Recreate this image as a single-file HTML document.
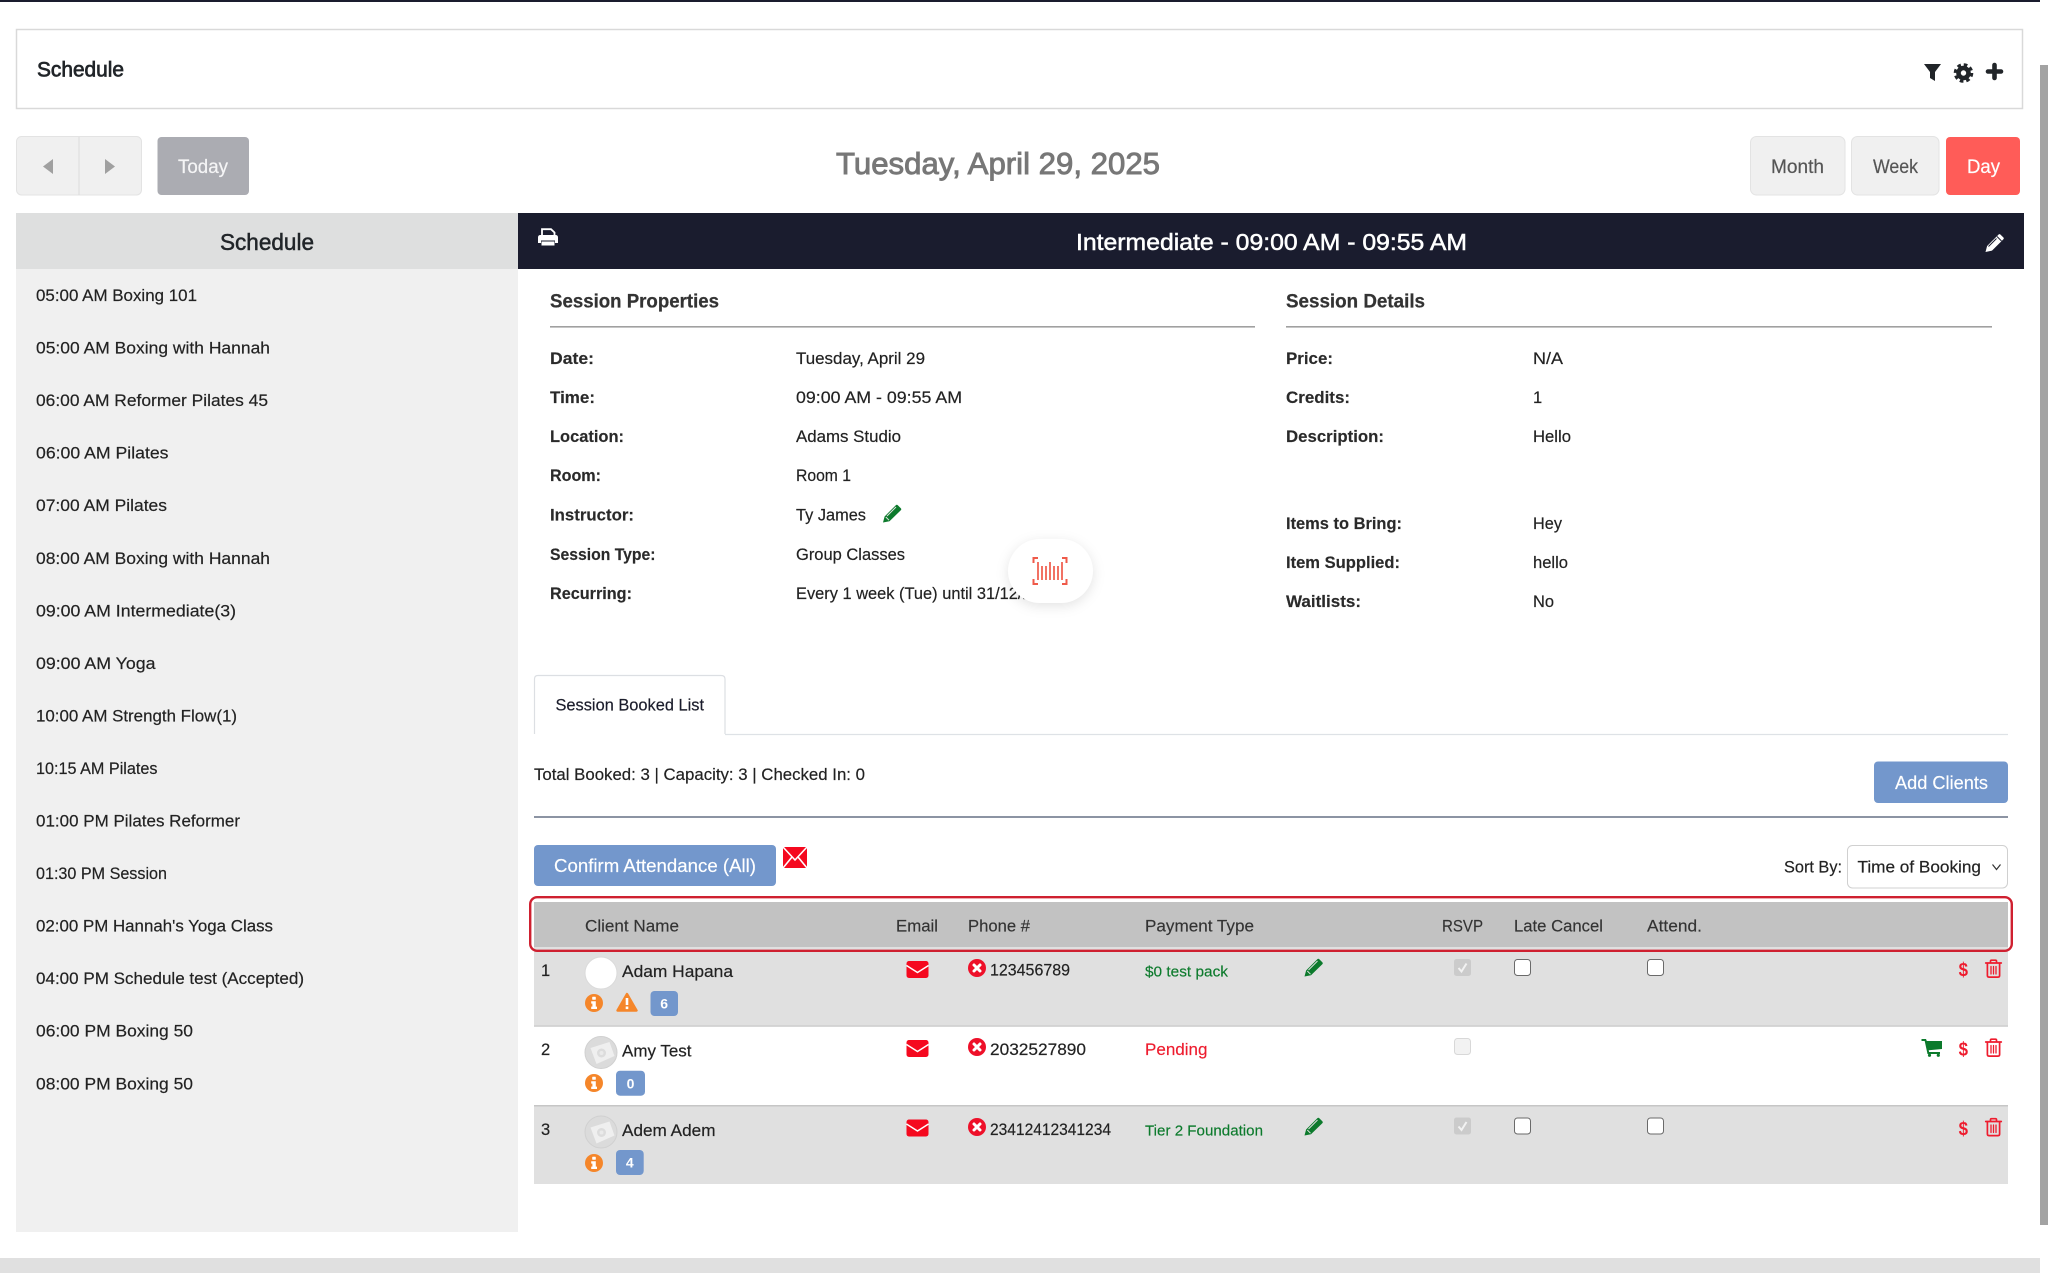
<!DOCTYPE html>
<html lang="en"><head><meta charset="utf-8"><title>Schedule</title>
<style>
html,body{margin:0;padding:0;background:#fff;width:2048px;height:1273px;overflow:hidden}
svg{display:block}
text{font-family:"Liberation Sans",sans-serif;fill:#222;white-space:pre}
.s{font-size:16.5px;stroke:#222;stroke-width:.18px}
.b{font-size:16.5px;font-weight:bold;fill:#2a2a2a;stroke:#2a2a2a;stroke-width:.15px}
.h{font-size:19px;font-weight:bold;fill:#333;stroke:#333;stroke-width:.25px}
.th{font-size:16.5px;fill:#333;stroke:#333;stroke-width:.15px}
.d{font-size:19px;font-weight:bold;fill:#ee1c2e}
</style></head><body>
<svg xmlns="http://www.w3.org/2000/svg" width="2048" height="1273" viewBox="0 0 2048 1273">
<defs>
<g id="mail"><rect width="22" height="17" rx="2.5" fill="#f5091f"/><path d="M0 4.5 L11 11.5 L22 4.5" fill="none" stroke="#fff" stroke-width="1.5"/></g>
<g id="xc"><circle cx="9" cy="9" r="9" fill="#ee1029"/><path d="M6 6 L12 12 M12 6 L6 12" stroke="#fff" stroke-width="3" stroke-linecap="round"/></g>
<g id="pen"><path d="M0 18.5 L1.6 12.5 L12.8 1.2 Q13.8 .2 14.8 1.2 L17.8 4.2 Q18.8 5.2 17.8 6.2 L6.5 17.2 Z" fill="#0c7a2c"/><path d="M2.8 13 L6 16.2 M4 12 L13 3" stroke="#e0e0e0" stroke-width="1" fill="none"/></g>
<g id="tr" fill="none" stroke="#ee1c2e" stroke-linecap="round"><path stroke-width="1.7" d="M5.5 3 V1.6 Q5.5 .7 6.5 .7 H10.5 Q11.5 .7 11.5 1.6 V3 M.7 3.5 H16.3 M2.4 3.5 V16 Q2.4 17.6 4 17.6 H13 Q14.6 17.6 14.6 16 V3.5"/><path stroke-width="1.3" d="M6 7 V14.5 M8.5 7 V14.5 M11 7 V14.5"/></g>
<g id="info"><circle cx="9" cy="9" r="9" fill="#f5862a"/><rect x="7.2" y="2.8" width="3.6" height="3" rx=".7" fill="#fff"/><path d="M6.2 7.2 H10.8 V12.6 H12 V15 H6.2 V12.6 H7.4 V9.6 H6.2 Z" fill="#fff"/></g>
<g id="ck"><rect x=".5" y=".5" width="16" height="16" rx="3" fill="#fff" stroke="#6a6a6a" stroke-width="1"/></g>
<g id="dis"><rect width="17" height="17" rx="2.5" fill="#cbcbcb"/><path d="M4.5 9 L7.5 12.5 L12.5 4.5" fill="none" stroke="#f2f2f2" stroke-width="2"/></g>
<g id="av"><circle cx="16.5" cy="16.5" r="16" fill="#dbdbdb" stroke="#d0d0d0"/><path d="M6 12 L25 6 L30 20 L12 28 Z" fill="#efefef"/><circle cx="17" cy="17" r="4.5" fill="#dcdcdc"/><circle cx="17" cy="17" r="2" fill="#eaeaea"/></g>
</defs>

<rect width="2040" height="2" fill="#1a1c2e"/>
<rect x="2040" y="65" width="8" height="1160" fill="#a3a3a3"/>
<rect y="1258" width="2040" height="15" fill="#e0e0e0"/>

<!-- Header panel -->
<rect x="16.5" y="29.5" width="2006" height="79" fill="#fff" stroke="#d9d9d9" stroke-width="1.5"/>
<text x="37" y="76.5" font-size="21" textLength="87" lengthAdjust="spacingAndGlyphs" style="fill:#212529;stroke:#212529;stroke-width:.7px">Schedule</text>
<path d="M1924 64 H1941 L1935 72 V81 L1930 78 V72 Z" fill="#212529"/>
<circle cx="1963.5" cy="73" r="5" fill="none" stroke="#212529" stroke-width="4.6"/>
<circle cx="1963.5" cy="73" r="8.2" fill="none" stroke="#212529" stroke-width="3.2" stroke-dasharray="3.6 2.84"/>
<path d="M1994.5 65 V78 M1988 71.5 H2001" stroke="#212529" stroke-width="4.6" stroke-linecap="round"/>

<!-- Toolbar -->
<rect x="16.5" y="136.5" width="125" height="58.5" rx="5" fill="#f0f0f0" stroke="#e3e3e3"/>
<path d="M79 137 V195" stroke="#dcdcdc"/>
<path d="M53 159 V174 L43 166.5 Z M105 159 V174 L115 166.5 Z" fill="#a0a0a0"/>
<rect x="157.5" y="137" width="91.5" height="58" rx="4" fill="#abacb2"/>
<text x="178" y="173" font-size="19" textLength="50" lengthAdjust="spacingAndGlyphs" style="fill:#f5f5f6;stroke:#f5f5f6;stroke-width:.2px">Today</text>
<text x="836" y="174" font-size="31" textLength="324" lengthAdjust="spacingAndGlyphs" style="fill:#777;stroke:#777;stroke-width:.9px">Tuesday, April 29, 2025</text>
<rect x="1750.5" y="136.5" width="94.5" height="58.5" rx="6" fill="#f0f0f0" stroke="#e3e3e3"/>
<text x="1771" y="173" font-size="19" textLength="53" lengthAdjust="spacingAndGlyphs" style="fill:#555;stroke:#555;stroke-width:.2px">Month</text>
<rect x="1851.5" y="136.5" width="87.5" height="58.5" rx="6" fill="#f0f0f0" stroke="#e3e3e3"/>
<text x="1873" y="173" font-size="19" textLength="45" lengthAdjust="spacingAndGlyphs" style="fill:#555;stroke:#555;stroke-width:.2px">Week</text>
<rect x="1946" y="137" width="74" height="58" rx="4" fill="#ff5c58"/>
<text x="1967" y="173" font-size="19" textLength="33" lengthAdjust="spacingAndGlyphs" style="fill:#fff;stroke:#fff;stroke-width:.2px">Day</text>

<!-- Sidebar -->
<rect x="16" y="269" width="502" height="963" fill="#f0f0f0"/>
<rect x="16" y="213" width="502" height="56" fill="#dedfdf"/>
<text x="220" y="250" font-size="23" textLength="94" lengthAdjust="spacingAndGlyphs" style="fill:#212529;stroke:#212529;stroke-width:.5px">Schedule</text>
<g class="s">
<text x="36" y="301" textLength="161" lengthAdjust="spacingAndGlyphs">05:00 AM Boxing 101</text>
<text x="36" y="353.6" textLength="234" lengthAdjust="spacingAndGlyphs">05:00 AM Boxing with Hannah</text>
<text x="36" y="406.1" textLength="232" lengthAdjust="spacingAndGlyphs">06:00 AM Reformer Pilates 45</text>
<text x="36" y="458.7" textLength="132.5" lengthAdjust="spacingAndGlyphs">06:00 AM Pilates</text>
<text x="36" y="511.2" textLength="131" lengthAdjust="spacingAndGlyphs">07:00 AM Pilates</text>
<text x="36" y="563.8" textLength="234" lengthAdjust="spacingAndGlyphs">08:00 AM Boxing with Hannah</text>
<text x="36" y="616.3" textLength="200" lengthAdjust="spacingAndGlyphs">09:00 AM Intermediate(3)</text>
<text x="36" y="668.9" textLength="119.5" lengthAdjust="spacingAndGlyphs">09:00 AM Yoga</text>
<text x="36" y="721.4" textLength="201" lengthAdjust="spacingAndGlyphs">10:00 AM Strength Flow(1)</text>
<text x="36" y="774" textLength="121.5" lengthAdjust="spacingAndGlyphs">10:15 AM Pilates</text>
<text x="36" y="826.5" textLength="204" lengthAdjust="spacingAndGlyphs">01:00 PM Pilates Reformer</text>
<text x="36" y="879.1" textLength="131" lengthAdjust="spacingAndGlyphs">01:30 PM Session</text>
<text x="36" y="931.6" textLength="237" lengthAdjust="spacingAndGlyphs">02:00 PM Hannah's Yoga Class</text>
<text x="36" y="984.2" textLength="268" lengthAdjust="spacingAndGlyphs">04:00 PM Schedule test (Accepted)</text>
<text x="36" y="1036.7" textLength="157" lengthAdjust="spacingAndGlyphs">06:00 PM Boxing 50</text>
<text x="36" y="1089.3" textLength="157" lengthAdjust="spacingAndGlyphs">08:00 PM Boxing 50</text>
</g>

<!-- Session bar -->
<rect x="518" y="213" width="1506" height="56" fill="#1a1c2e"/>
<g fill="none" stroke="#fff" stroke-width="1.8"><path d="M542 236 V229.2 H551 L554.5 232.5 V236"/></g>
<path d="M540.5 235 H555.5 Q558 235 558 237.5 V243 H555 V240.5 H541 V243 H538 V237.5 Q538 235 540.5 235 Z" fill="#fff"/>
<rect x="541.5" y="241.5" width="13" height="4" fill="#fff"/>
<text x="1076" y="250" font-size="23.5" textLength="391" lengthAdjust="spacingAndGlyphs" style="fill:#fff;stroke:#fff;stroke-width:.5px">Intermediate - 09:00 AM - 09:55 AM</text>
<g transform="translate(1985.5 233)"><path d="M0 19 L1.6 13 L13 1.6 Q14 .6 15 1.6 L17.8 4.4 Q18.8 5.4 17.8 6.4 L6.5 17.6 Z" fill="#fff"/><path d="M11.5 3.5 L16 8 M3 13.5 L11 5.5" stroke="#1a1c2e" stroke-width="1" fill="none"/></g>

<!-- Session Properties -->
<text x="550" y="307.7" class="h" textLength="169" lengthAdjust="spacingAndGlyphs">Session Properties</text>
<rect x="550" y="326" width="705" height="1.6" fill="#a0a0a0"/>
<text x="1286" y="307.7" class="h" textLength="139" lengthAdjust="spacingAndGlyphs">Session Details</text>
<rect x="1286" y="326" width="706" height="1.6" fill="#a0a0a0"/>

<text x="550" y="364" class="b" textLength="44" lengthAdjust="spacingAndGlyphs">Date:</text>
<text x="550" y="403" class="b" textLength="45" lengthAdjust="spacingAndGlyphs">Time:</text>
<text x="550" y="442" class="b" textLength="74" lengthAdjust="spacingAndGlyphs">Location:</text>
<text x="550" y="481" class="b" textLength="51" lengthAdjust="spacingAndGlyphs">Room:</text>
<text x="550" y="520.7" class="b" textLength="84" lengthAdjust="spacingAndGlyphs">Instructor:</text>
<text x="550" y="560" class="b" textLength="105.5" lengthAdjust="spacingAndGlyphs">Session Type:</text>
<text x="550" y="599" class="b" textLength="82" lengthAdjust="spacingAndGlyphs">Recurring:</text>

<text x="796" y="364" class="s" textLength="129" lengthAdjust="spacingAndGlyphs">Tuesday, April 29</text>
<text x="796" y="403" class="s" textLength="166" lengthAdjust="spacingAndGlyphs">09:00 AM - 09:55 AM</text>
<text x="796" y="442" class="s" textLength="105" lengthAdjust="spacingAndGlyphs">Adams Studio</text>
<text x="796" y="481" class="s" textLength="55" lengthAdjust="spacingAndGlyphs" style="font-size:17px">Room 1</text>
<text x="796" y="520.7" class="s" textLength="70" lengthAdjust="spacingAndGlyphs">Ty James</text>
<use href="#pen" transform="translate(883 504)"/>
<text x="796" y="560" class="s" textLength="109" lengthAdjust="spacingAndGlyphs">Group Classes</text>
<text x="796" y="599" class="s" textLength="263" lengthAdjust="spacingAndGlyphs">Every 1 week (Tue) until 31/12/2025</text>

<text x="1286" y="364" class="b" textLength="47" lengthAdjust="spacingAndGlyphs">Price:</text>
<text x="1286" y="403" class="b" textLength="64" lengthAdjust="spacingAndGlyphs">Credits:</text>
<text x="1286" y="442" class="b" textLength="98" lengthAdjust="spacingAndGlyphs">Description:</text>
<text x="1286" y="529" class="b" textLength="116" lengthAdjust="spacingAndGlyphs">Items to Bring:</text>
<text x="1286" y="568" class="b" textLength="114" lengthAdjust="spacingAndGlyphs">Item Supplied:</text>
<text x="1286" y="607" class="b" textLength="75" lengthAdjust="spacingAndGlyphs">Waitlists:</text>
<text x="1533" y="364" class="s" textLength="30" lengthAdjust="spacingAndGlyphs">N/A</text>
<text x="1533" y="403" class="s">1</text>
<text x="1533" y="442" class="s" textLength="38" lengthAdjust="spacingAndGlyphs">Hello</text>
<text x="1533" y="529" class="s" textLength="29" lengthAdjust="spacingAndGlyphs">Hey</text>
<text x="1533" y="568" class="s" textLength="35" lengthAdjust="spacingAndGlyphs">hello</text>
<text x="1533" y="607" class="s" textLength="21" lengthAdjust="spacingAndGlyphs">No</text>

<!-- Barcode float -->
<rect x="1008" y="539" width="85" height="64" rx="32" fill="#fff" style="filter:drop-shadow(0 3px 6px rgba(0,0,0,.11))"/>
<g fill="none" stroke="#ef5a4a" stroke-width="2"><path d="M1038 558 H1033.5 V563 M1062 558 H1066.5 V563 M1038 584 H1033.5 V579 M1062 584 H1066.5 V579"/></g>
<g stroke="#ef5a4a" stroke-width="1.7"><path d="M1038 562 V580 M1042 566 V580 M1046 566 V580 M1050 562 V580 M1054 566 V580 M1058 566 V580 M1062 562 V580"/></g>

<!-- Tab -->
<path d="M725 734.5 H2008" stroke="#dee2e6" stroke-width="1.2"/>
<path d="M534.5 734 V679 Q534.5 675.5 538 675.5 H721 Q725 675.5 725 679 V734" fill="#fff" stroke="#dcdfe3" stroke-width="1.2"/>
<text x="555.5" y="710.5" class="s" textLength="148.5" lengthAdjust="spacingAndGlyphs" style="fill:#1a1c2e">Session Booked List</text>

<text x="534" y="780" class="s" textLength="331" lengthAdjust="spacingAndGlyphs">Total Booked: 3 | Capacity: 3 | Checked In: 0</text>
<rect x="1874" y="761.5" width="134" height="41.5" rx="4" fill="#7397cc"/>
<text x="1895" y="789" font-size="18" textLength="93" lengthAdjust="spacingAndGlyphs" style="fill:#fff;stroke:#fff;stroke-width:.15px">Add Clients</text>
<rect x="534" y="816" width="1474" height="2" fill="#8c94a3"/>

<rect x="534" y="845" width="242" height="41" rx="4" fill="#7397cc"/>
<text x="554" y="872" font-size="18" textLength="202" lengthAdjust="spacingAndGlyphs" style="fill:#fff;stroke:#fff;stroke-width:.15px">Confirm Attendance (All)</text>
<rect x="783" y="847" width="24" height="21" fill="#f5091f"/>
<path d="M783 847 L795 860 L807 847 M783 868 L792 857 M807 868 L798 857" stroke="#fff" stroke-width="1.6" fill="none"/>

<text x="1784" y="872.7" class="s" textLength="58" lengthAdjust="spacingAndGlyphs">Sort By:</text>
<rect x="1847.5" y="845.5" width="160" height="42.5" rx="5" fill="#fff" stroke="#d0d0d0"/>
<text x="1857.5" y="872.7" class="s" textLength="123.5" lengthAdjust="spacingAndGlyphs">Time of Booking</text>
<path d="M1992.5 864.5 L1996.5 869.5 L2000.5 864.5" fill="none" stroke="#333" stroke-width="1.2"/>

<!-- Table rows -->
<rect x="534" y="947" width="1474" height="79" fill="#e0e0e0"/>
<rect x="534" y="1025.5" width="1474" height="1.2" fill="#c6c6c6"/>
<rect x="534" y="1105" width="1474" height="79" fill="#e0e0e0"/>
<rect x="534" y="1105" width="1474" height="1.5" fill="#c6c6c6"/>

<!-- Table head -->
<rect x="534" y="902" width="1474" height="45" fill="#c2c2c2"/>
<rect x="530.2" y="897.2" width="1481.6" height="53.6" rx="7" fill="none" stroke="#cf2030" stroke-width="2.4"/>
<text x="585" y="931.7" class="th" textLength="94" lengthAdjust="spacingAndGlyphs">Client Name</text>
<text x="896" y="931.7" class="th" textLength="42" lengthAdjust="spacingAndGlyphs">Email</text>
<text x="968" y="931.7" class="th" textLength="62" lengthAdjust="spacingAndGlyphs">Phone #</text>
<text x="1145" y="931.7" class="th" textLength="109" lengthAdjust="spacingAndGlyphs">Payment Type</text>
<text x="1442" y="931.7" class="th" textLength="41" lengthAdjust="spacingAndGlyphs">RSVP</text>
<text x="1514" y="931.7" class="th" textLength="89" lengthAdjust="spacingAndGlyphs">Late Cancel</text>
<text x="1647" y="931.7" class="th" textLength="55" lengthAdjust="spacingAndGlyphs">Attend.</text>

<!-- Row 1 -->
<text x="541" y="976" class="s">1</text>
<circle cx="601" cy="973" r="16" fill="#fff" stroke="#dadada"/>
<text x="622" y="977" class="s" textLength="111" lengthAdjust="spacingAndGlyphs">Adam Hapana</text>
<use href="#info" transform="translate(585 994)"/>
<path d="M627 994 L636.5 1010.5 H617.5 Z" fill="#f5862a" stroke="#f5862a" stroke-width="2.4" stroke-linejoin="round"/>
<rect x="625.7" y="998" width="2.6" height="7" fill="#fff"/><rect x="625.7" y="1006.5" width="2.6" height="2.6" fill="#fff"/>
<rect x="650.5" y="991" width="27.5" height="25" rx="4" fill="#7397cc"/>
<text x="664.2" y="1008.5" font-size="14" font-weight="bold" text-anchor="middle" style="fill:#fff">6</text>
<use href="#mail" transform="translate(906.5 961)"/>
<use href="#xc" transform="translate(968 959)"/>
<text x="990" y="975.7" class="s" textLength="80" lengthAdjust="spacingAndGlyphs">123456789</text>
<text x="1145" y="976.5" font-size="14.5" textLength="83" lengthAdjust="spacingAndGlyphs" style="fill:#0c7a2c;stroke:#0c7a2c;stroke-width:.15px">$0 test pack</text>
<use href="#pen" transform="translate(1304.5 958)"/>
<use href="#dis" transform="translate(1454 959)"/>
<use href="#ck" transform="translate(1514 959)"/>
<use href="#ck" transform="translate(1647 959)"/>
<text x="1958.6" y="976" class="d" textLength="9.4" lengthAdjust="spacingAndGlyphs">$</text>
<use href="#tr" transform="translate(1985 959.5)"/>

<!-- Row 2 -->
<text x="541" y="1055" class="s">2</text>
<use href="#av" transform="translate(584.5 1036)"/>
<text x="622" y="1056.7" class="s" textLength="69.5" lengthAdjust="spacingAndGlyphs">Amy Test</text>
<use href="#info" transform="translate(585 1074)"/>
<rect x="616" y="1070.7" width="29" height="25" rx="4" fill="#7397cc"/>
<text x="630.5" y="1088.5" font-size="14" font-weight="bold" text-anchor="middle" style="fill:#fff">0</text>
<use href="#mail" transform="translate(906.5 1040)"/>
<use href="#xc" transform="translate(968 1038)"/>
<text x="990" y="1055" class="s" textLength="96" lengthAdjust="spacingAndGlyphs">2032527890</text>
<text x="1145" y="1055" font-size="16.5" textLength="62.5" lengthAdjust="spacingAndGlyphs" style="fill:#ee1c2e;stroke:#ee1c2e;stroke-width:.15px">Pending</text>
<rect x="1454.5" y="1038.5" width="16" height="16" rx="3" fill="#f2f2f2" stroke="#d8d8d8"/>
<g transform="translate(1921.5 1039)" fill="#0c7a2c"><path d="M0 0 H4.5 L5.3 2 H20.5 V10 L7.2 11.3 L7.6 13 H18.5 V15 H6 L3.2 2 H0 Z"/><circle cx="8" cy="16.3" r="1.6"/><circle cx="16.8" cy="16.3" r="1.6"/></g>
<text x="1958.6" y="1055.5" class="d" textLength="9.4" lengthAdjust="spacingAndGlyphs">$</text>
<use href="#tr" transform="translate(1985 1038.5)"/>

<!-- Row 3 -->
<text x="541" y="1135" class="s">3</text>
<use href="#av" transform="translate(584.5 1115.5)"/>
<text x="622" y="1136" class="s" textLength="93.5" lengthAdjust="spacingAndGlyphs">Adem Adem</text>
<use href="#info" transform="translate(585 1154)"/>
<rect x="616" y="1150" width="27.7" height="25" rx="4" fill="#7397cc"/>
<text x="629.8" y="1167.5" font-size="14" font-weight="bold" text-anchor="middle" style="fill:#fff">4</text>
<use href="#mail" transform="translate(906.5 1119.5)"/>
<use href="#xc" transform="translate(968 1118)"/>
<text x="990" y="1135" class="s" textLength="121" lengthAdjust="spacingAndGlyphs">23412412341234</text>
<text x="1145" y="1135.5" font-size="14.5" textLength="118" lengthAdjust="spacingAndGlyphs" style="fill:#0c7a2c;stroke:#0c7a2c;stroke-width:.15px">Tier 2 Foundation</text>
<use href="#pen" transform="translate(1304.5 1117)"/>
<use href="#dis" transform="translate(1454 1117.5)"/>
<use href="#ck" transform="translate(1514 1117.5)"/>
<use href="#ck" transform="translate(1647 1117.5)"/>
<text x="1958.6" y="1135" class="d" textLength="9.4" lengthAdjust="spacingAndGlyphs">$</text>
<use href="#tr" transform="translate(1985 1118)"/>
</svg>
</body></html>
